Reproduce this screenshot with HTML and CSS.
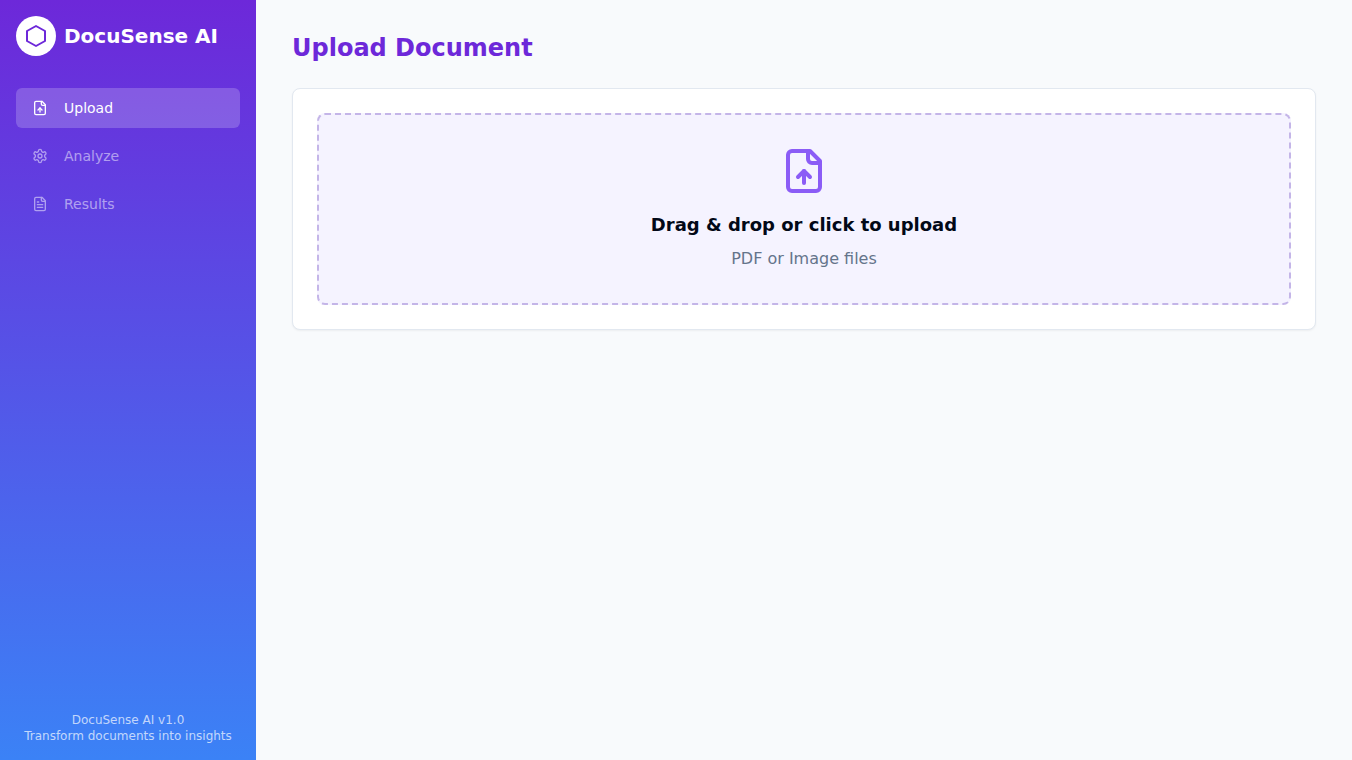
FILE: index.html
```html
<!DOCTYPE html>
<html lang="en">
<head>
    <meta charset="UTF-8">
    <meta name="viewport" content="width=device-width, initial-scale=1.0">
    <title>DocuSense AI</title>
    <link rel="stylesheet" href="styles.css">
</head>
<body>
    <div class="app">
        <aside class="sidebar">
            <div class="brand">
                <div class="brand-icon">
                    <svg class="icon brand-hex" width="24" height="24" viewBox="0 0 24 24" aria-hidden="true">
                        <path d="M12 2L21 7V17L12 22L3 17V7L12 2Z"/>
                    </svg>
                </div>
                <span class="brand-name">DocuSense AI</span>
            </div>

            <nav class="nav">
                <button type="button" class="nav-item active">
                    <svg class="icon" width="16" height="16" viewBox="0 0 24 24" aria-hidden="true">
                        <path d="M15 2H6a2 2 0 0 0-2 2v16a2 2 0 0 0 2 2h12a2 2 0 0 0 2-2V7Z"/>
                        <path d="M14 2v4a2 2 0 0 0 2 2h4"/>
                        <path d="M12 12v6"/>
                        <path d="m15 15-3-3-3 3"/>
                    </svg>
                    Upload
                </button>
                <button type="button" class="nav-item" disabled>
                    <svg class="icon" width="16" height="16" viewBox="0 0 24 24" aria-hidden="true">
                        <path d="M12.22 2h-.44a2 2 0 0 0-2 2v.18a2 2 0 0 1-1 1.73l-.43.25a2 2 0 0 1-2 0l-.15-.08a2 2 0 0 0-2.73.73l-.22.38a2 2 0 0 0 .73 2.73l.15.1a2 2 0 0 1 1 1.72v.51a2 2 0 0 1-1 1.74l-.15.09a2 2 0 0 0-.73 2.73l.22.38a2 2 0 0 0 2.73.73l.15-.08a2 2 0 0 1 2 0l.43.25a2 2 0 0 1 1 1.73V20a2 2 0 0 0 2 2h.44a2 2 0 0 0 2-2v-.18a2 2 0 0 1 1-1.73l.43-.25a2 2 0 0 1 2 0l.15.08a2 2 0 0 0 2.73-.73l.22-.39a2 2 0 0 0-.73-2.73l-.15-.08a2 2 0 0 1-1-1.74v-.5a2 2 0 0 1 1-1.74l.15-.09a2 2 0 0 0 .73-2.73l-.22-.38a2 2 0 0 0-2.73-.73l-.15.08a2 2 0 0 1-2 0l-.43-.25a2 2 0 0 1-1-1.73V4a2 2 0 0 0-2-2z"/>
                        <circle cx="12" cy="12" r="3"/>
                    </svg>
                    Analyze
                </button>
                <button type="button" class="nav-item" disabled>
                    <svg class="icon" width="16" height="16" viewBox="0 0 24 24" aria-hidden="true">
                        <path d="M15 2H6a2 2 0 0 0-2 2v16a2 2 0 0 0 2 2h12a2 2 0 0 0 2-2V7Z"/>
                        <path d="M14 2v4a2 2 0 0 0 2 2h4"/>
                        <path d="M10 9H8"/>
                        <path d="M16 13H8"/>
                        <path d="M16 17H8"/>
                    </svg>
                    Results
                </button>
            </nav>

            <div class="sidebar-footer">
                <p>DocuSense AI v1.0</p>
                <p>Transform documents into insights</p>
            </div>
        </aside>

        <main class="main">
            <div class="content">
                <h1 class="page-title">Upload Document</h1>
                <div class="card">
                    <input type="file" id="fileInput" class="file-input" accept=".pdf,image/*">
                    <label for="fileInput" class="dropzone">
                        <svg class="icon dropzone-icon" width="48" height="48" viewBox="0 0 24 24" aria-hidden="true">
                            <path d="M15 2H6a2 2 0 0 0-2 2v16a2 2 0 0 0 2 2h12a2 2 0 0 0 2-2V7Z"/>
                            <path d="M14 2v4a2 2 0 0 0 2 2h4"/>
                            <path d="M12 12v6"/>
                            <path d="m15 15-3-3-3 3"/>
                        </svg>
                        <span class="dropzone-title">Drag &amp; drop or click to upload</span>
                        <span class="dropzone-hint">PDF or Image files</span>
                    </label>
                </div>
            </div>
        </main>
    </div>
</body>
</html>
```
FILE: styles.css
```css
* {
    margin: 0;
    padding: 0;
    box-sizing: border-box;
}

body {
    font-family: 'DejaVu Sans', sans-serif;
    font-size: 16px;
    line-height: 24px;
    color: #020817;
    background: #f8fafc;
}

.app {
    display: flex;
    min-height: 100vh;
}

.icon {
    flex-shrink: 0;
    fill: none;
    stroke: currentColor;
    stroke-width: 2;
    stroke-linecap: round;
    stroke-linejoin: round;
}

/* Sidebar */
.sidebar {
    width: 256px;
    flex-shrink: 0;
    display: flex;
    flex-direction: column;
    padding: 16px;
    color: #fff;
    background: linear-gradient(to bottom, #6d28d9, #3b82f6);
}

.brand {
    display: flex;
    align-items: center;
    gap: 8px;
    margin-bottom: 32px;
}

.brand-icon {
    display: flex;
    align-items: center;
    justify-content: center;
    width: 40px;
    height: 40px;
    border-radius: 50%;
    background: #fff;
    color: #6d28d9;
}

.brand-name {
    font-size: 20px;
    line-height: 28px;
    font-weight: bold;
}

.nav {
    display: flex;
    flex-direction: column;
    gap: 8px;
}

.nav-item {
    display: flex;
    align-items: center;
    gap: 16px;
    height: 40px;
    padding: 8px 16px;
    border: none;
    border-radius: 6px;
    background: transparent;
    color: #fff;
    font-family: inherit;
    font-size: 14px;
    line-height: 20px;
    cursor: pointer;
}

.nav-item.active {
    background: rgba(255, 255, 255, 0.2);
}

.nav-item:disabled {
    color: #fff;
    opacity: 0.5;
    cursor: default;
}

.sidebar-footer {
    margin-top: auto;
    text-align: center;
    font-size: 12px;
    line-height: 16px;
    color: rgba(255, 255, 255, 0.7);
}

/* Main area */
.main {
    flex: 1;
    padding: 32px;
}

.content {
    max-width: 1024px;
    margin: 0 auto;
}

.page-title {
    margin-bottom: 24px;
    font-size: 24px;
    line-height: 32px;
    font-weight: bold;
    color: #6d28d9;
}

.card {
    position: relative;
    padding: 24px;
    border: 1px solid #e2e8f0;
    border-radius: 8px;
    background: #fff;
    box-shadow: 0 1px 2px rgba(0, 0, 0, 0.05);
}

.file-input {
    position: absolute;
    width: 1px;
    height: 1px;
    opacity: 0;
}

.dropzone {
    display: flex;
    flex-direction: column;
    align-items: center;
    padding: 32px;
    border: 2px dashed #c4b5e8;
    border-radius: 8px;
    background: #f5f3ff;
    text-align: center;
    cursor: pointer;
}

.dropzone:hover {
    border-color: #8b5cf6;
}

.dropzone-icon {
    margin-bottom: 16px;
    color: #8b5cf6;
}

.dropzone-title {
    margin-bottom: 8px;
    font-size: 18px;
    line-height: 28px;
    font-weight: bold;
}

.dropzone-hint {
    color: #64748b;
}
```
